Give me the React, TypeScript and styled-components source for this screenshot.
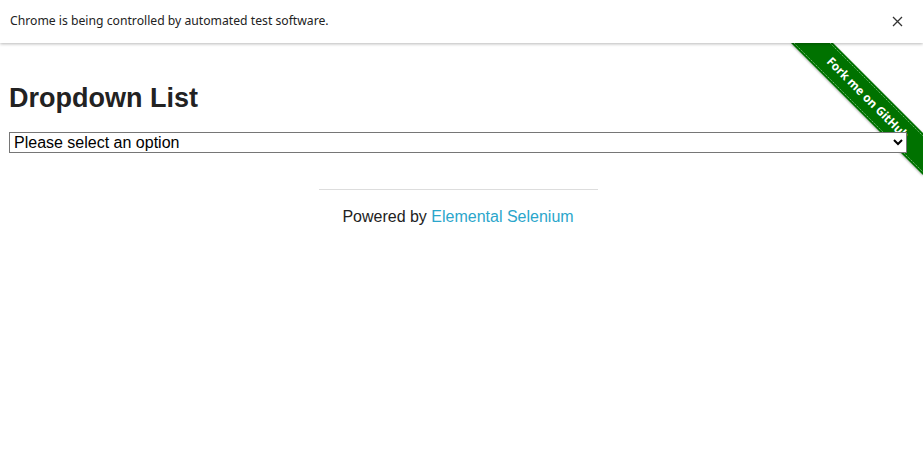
import { FC } from "react";
import styled, { createGlobalStyle } from "styled-components";

const GlobalStyle = createGlobalStyle`
  html, body {
    margin: 0;
    padding: 0;
    background: #fff;
  }
  body {
    font-family: "Liberation Sans", Arial, sans-serif;
    color: #222;
  }
`;

const InfoBar: FC = () => (
  <InfoBarContainer>
    <InfoBarText>Chrome is being controlled by automated test software.</InfoBarText>
    <CloseButton aria-label="close">
      <svg width="11" height="11" viewBox="0 0 11 11">
        <path d="M1 1 L10 10 M10 1 L1 10" stroke="#333" strokeWidth="1.3" />
      </svg>
    </CloseButton>
  </InfoBarContainer>
);

const ForkRibbon: FC = () => (
  <RibbonLink href="#">
    <svg width="149" height="149" viewBox="0 0 149 149">
      <defs>
        <filter id="rshadow" x="-10%" y="-10%" width="130%" height="130%">
          <feDropShadow dx="0" dy="1" stdDeviation="0.8" floodColor="#000" floodOpacity="0.35" />
        </filter>
      </defs>
      <polygon points="17,0 59,0 149,90 149,132" fill="#007200" filter="url(#rshadow)" />
      <line x1="20" y1="0" x2="149" y2="129" stroke="#8cc98c" strokeWidth="1" strokeDasharray="1.4 1" opacity="0.8" />
      <line x1="56" y1="0" x2="149" y2="93" stroke="#8cc98c" strokeWidth="1" strokeDasharray="1.4 1" opacity="0.8" />
      <text
        x="0"
        y="0"
        transform="translate(94 55) rotate(45)"
        textAnchor="middle"
        dominantBaseline="central"
        fill="#fff"
        fontFamily="'Noto Sans', 'Open Sans', sans-serif"
        fontWeight="bold"
        fontSize="12"
        textLength="110"
        lengthAdjust="spacingAndGlyphs"
      >
        Fork me on GitHub
      </text>
    </svg>
  </RibbonLink>
);

const App: FC = () => {
  return (
    <>
      <GlobalStyle />
      <InfoBar />
      <Page>
        <ForkRibbon />
        <Content>
          <Heading>Dropdown List</Heading>
          <Dropdown defaultValue="">
            <option value="" disabled>
              Please select an option
            </option>
            <option value="1">Option 1</option>
            <option value="2">Option 2</option>
          </Dropdown>
        </Content>
        <Footer>
          <FooterRule />
          <FooterText>
            Powered by <FooterLink href="#">Elemental Selenium</FooterLink>
          </FooterText>
        </Footer>
      </Page>
    </>
  );
};

export default App;

const InfoBarContainer = styled.div`
  display: flex;
  align-items: center;
  justify-content: space-between;
  height: 43px;
  padding: 0 18px 0 10px;
  box-sizing: border-box;
  background: #fff;
  box-shadow: 0 1px 3px rgba(0, 0, 0, 0.28);
  position: relative;
  z-index: 2;
`;

const InfoBarText = styled.span`
  font-family: "Noto Sans", "Open Sans", sans-serif;
  font-size: 12.2px;
  color: #222;
  margin-top: -2px;
`;

const CloseButton = styled.button`
  display: flex;
  align-items: center;
  justify-content: center;
  width: 16px;
  height: 16px;
  padding: 0;
  border: none;
  background: transparent;
  margin-top: -1px;
`;

const Page = styled.div`
  position: relative;
  padding: 0 16px 0 9px;
`;

const RibbonLink = styled.a`
  position: absolute;
  top: 0;
  right: 0;
  display: block;
  width: 149px;
  height: 149px;
  line-height: 0;
`;

const Content = styled.div`
  display: flex;
  flex-direction: column;
  padding-top: 40px;
`;

const Heading = styled.h3`
  margin: 0 0 18px;
  font-size: 27px;
  line-height: 31px;
  font-weight: bold;
  color: #222;
`;

const Dropdown = styled.select`
  position: relative;
  width: 100%;
  height: 21px;
  margin: 0;
  padding: 0;
  font-family: "Liberation Sans", Arial, sans-serif;
  font-size: 16px;
  color: #000;
  background: #fff;
  border: 1px solid #767676;
  border-radius: 0;
  box-sizing: border-box;
`;

const Footer = styled.div`
  display: flex;
  flex-direction: column;
  align-items: center;
  padding-top: 36px;
`;

const FooterRule = styled.hr`
  width: 279px;
  margin: 0;
  border: none;
  border-top: 1px solid #ddd;
`;

const FooterText = styled.div`
  margin-top: 17px;
  font-size: 16px;
  line-height: 20px;
  color: #222;
`;

const FooterLink = styled.a`
  color: #2ba6cb;
  text-decoration: none;
`;
